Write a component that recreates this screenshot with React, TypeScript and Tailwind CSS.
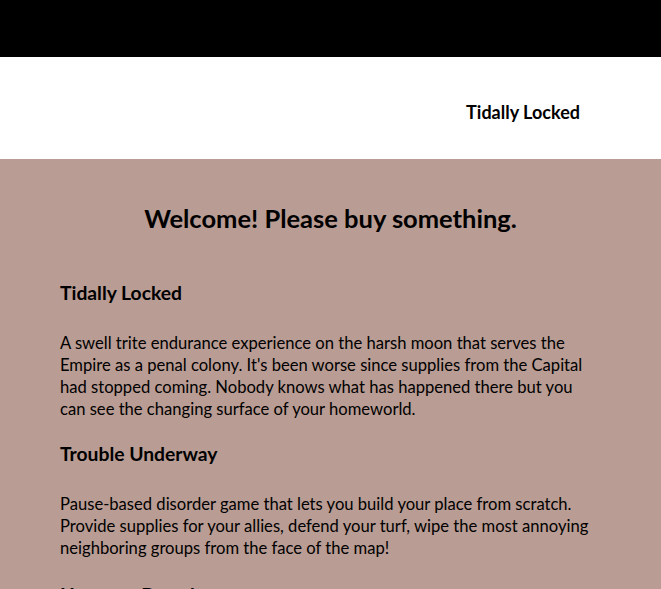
export default function App() {
  return (
    <div className="min-h-screen bg-[#b99c93] font-['Lato',sans-serif] text-black">
      <div className="h-[57px] bg-black" />
      <header className="flex h-[102px] items-center justify-end bg-white pt-2 pr-[81px]">
        <a href="#" className="text-[18px] font-bold">
          Tidally Locked
        </a>
      </header>
      <main className="px-[60px] pt-[44px]">
        <h1 className="text-center text-[25.5px] font-bold leading-[30px]">
          Welcome! Please buy something.
        </h1>
        <section className="mt-[48px]">
          <h3 className="text-[19.3px] font-bold leading-[24px]">Tidally Locked</h3>
          <p className="mt-[27px] text-[16.6px] leading-[22px]">
            A swell trite endurance experience on the harsh moon that serves the Empire as a
            penal colony. It's been worse since supplies from the Capital had stopped coming.
            Nobody knows what has happened there but you can see the changing surface of your
            homeworld.
          </p>
        </section>
        <section className="mt-[22px]">
          <h3 className="text-[19.3px] font-bold leading-[24px]">Trouble Underway</h3>
          <p className="mt-[27px] text-[16.6px] leading-[22px]">
            Pause-based disorder game that lets you build your place from scratch. Provide
            supplies for your allies, defend your turf, wipe the most annoying neighboring groups
            from the face of the map!
          </p>
        </section>
        <section className="mt-[24px]">
          <h3 className="text-[19.3px] font-bold leading-[24px]">Hexagon Breach</h3>
        </section>
      </main>
    </div>
  );
}
